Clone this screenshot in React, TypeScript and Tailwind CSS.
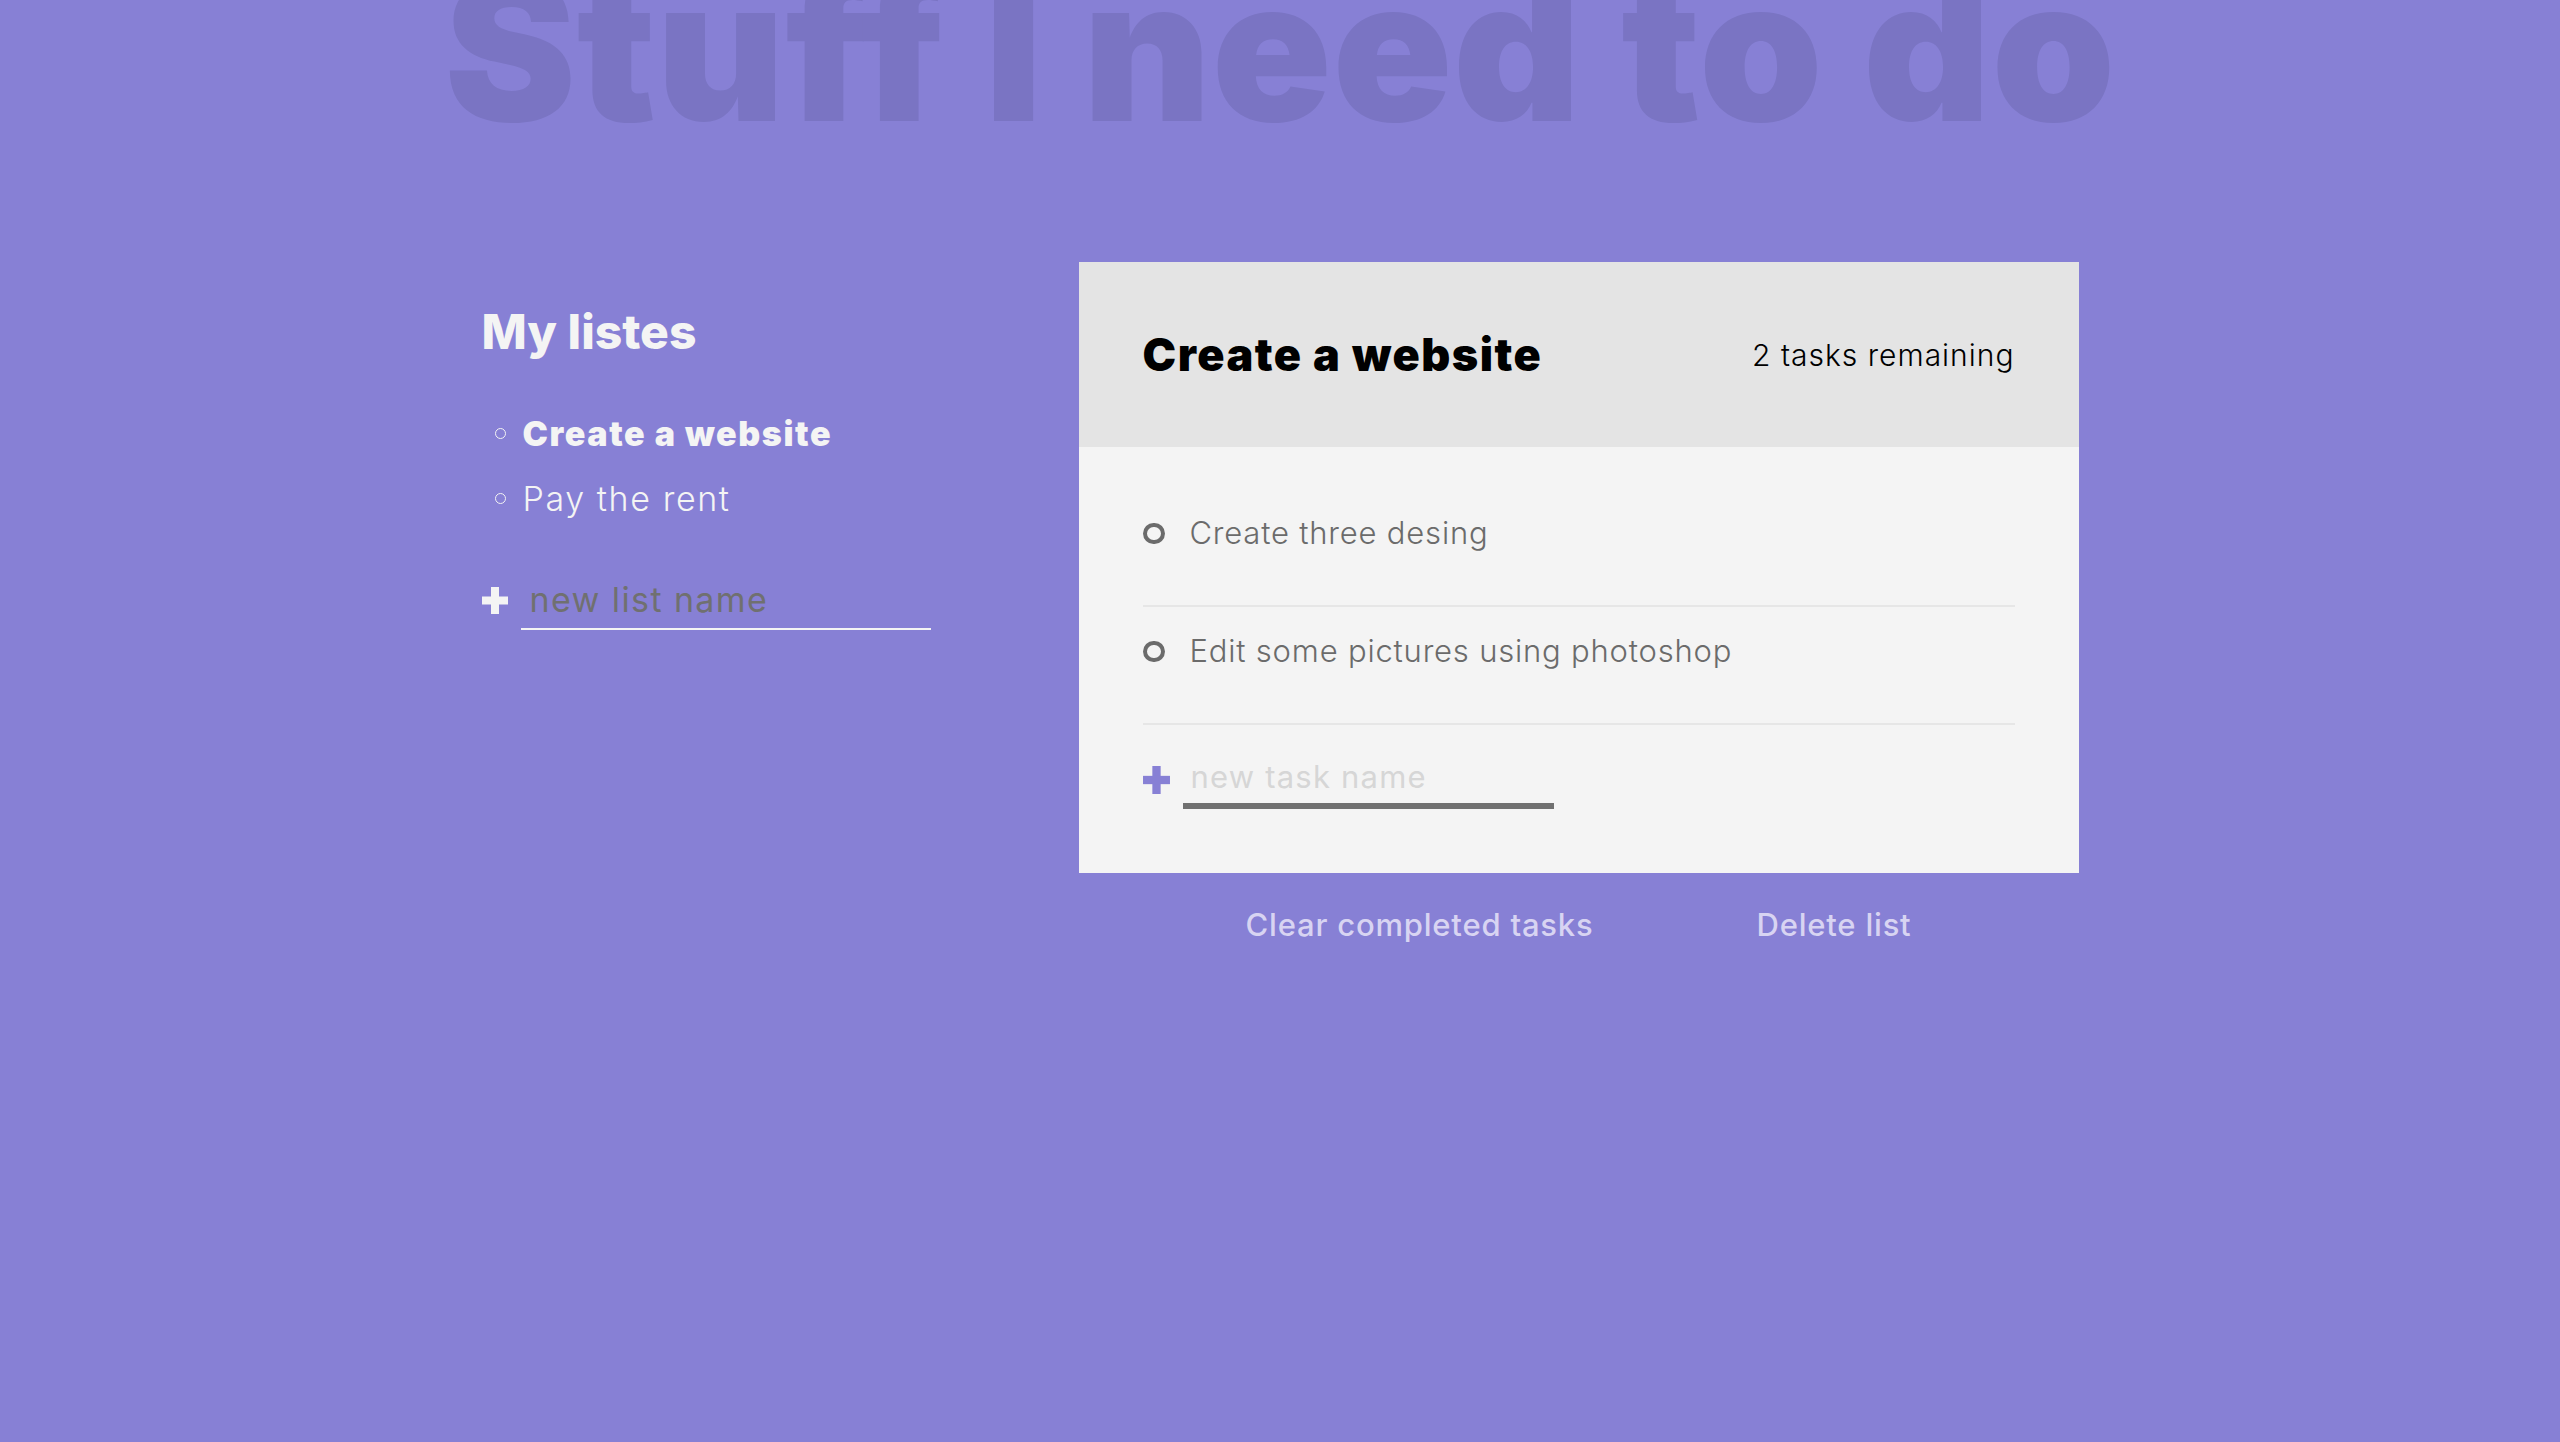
function Plus({ className }: { className: string }) {
  return (
    <svg viewBox="0 0 26 27" className={className} fill="currentColor">
      <rect x="9" y="0" width="8" height="27" />
      <rect x="0" y="9.5" width="26" height="8" />
    </svg>
  );
}

const lists = [
  { name: "Create a website", active: true },
  { name: "Pay the rent", active: false },
];

const tasks = ["Create three desing", "Edit some pictures using photoshop"];

export default function App() {
  return (
    <div className="min-h-[1442px] overflow-hidden bg-[#8780d5] font-['Inter',sans-serif]">
      <h1 className="-mt-[50px] whitespace-nowrap text-center text-[198px] font-black leading-none tracking-[0.5px] text-[#7a74c3]">
        Stuff I need to do
      </h1>

      <main className="mx-auto mt-[114px] grid w-[1597px] grid-cols-[597px_1000px]">
        <section className="pt-[46px] text-[#f4f4f4]">
          <h2 className="text-[48px] font-extrabold leading-none">My listes</h2>
          <ul className="mt-[45px]">
            {lists.map((l) => (
              <li key={l.name} className="flex h-[65px] items-center">
                <span className="ml-[13px] mr-[17px] h-[11px] w-[11px] rounded-full border-[1.5px] border-[#f4f4f4]" />
                <span
                  className={
                    l.active
                      ? "text-[34px] font-black tracking-[1.6px]"
                      : "text-[34px] font-light tracking-[1.6px]"
                  }
                >
                  {l.name}
                </span>
              </li>
            ))}
          </ul>
          <form className="mt-[40px] flex items-center">
            <button type="button" className="text-[#f4f4f4]">
              <Plus className="h-[27px] w-[26px]" />
            </button>
            <input
              placeholder="new list name"
              className="ml-[13px] h-[59px] w-[410px] border-b-2 border-[#f4f4f4] bg-transparent pl-[9px] text-[34px] tracking-[1.4px] text-[#f4f4f4] outline-none placeholder:text-[#707070]"
            />
          </form>
        </section>

        <section>
          <div className="bg-[#f4f4f4]">
            <header className="flex h-[185px] items-center justify-between bg-[#e4e4e4] px-[64px]">
              <h2 className="text-[45px] font-black leading-none tracking-[1.5px] text-black">Create a website</h2>
              <p className="text-[30px] font-light leading-none tracking-[1px] text-black">2 tasks remaining</p>
            </header>
            <div className="px-[64px] pb-[64px] pt-[42px]">
              {tasks.map((t) => (
                <div key={t} className="flex items-center border-b-2 border-[#e6e6e6] pb-[48px] pt-[20px] leading-[48px]">
                  <span className="h-[21px] w-[22px] rounded-full border-4 border-[#6b6b6b]" />
                  <span className="ml-[25px] text-[31px] font-light tracking-[0.8px] text-[#6b6b6b]">{t}</span>
                </div>
              ))}
              <form className="flex items-center pt-[25px]">
                <button type="button" className="text-[#8780d5]">
                  <Plus className="h-[28px] w-[27px]" />
                </button>
                <input
                  autoFocus
                  placeholder="new task name"
                  className="ml-[13px] h-[59px] w-[371px] border-b-[6px] border-[#707070] bg-transparent pl-[8px] text-[31px] tracking-[1.2px] text-[#6b6b6b] outline-none placeholder:text-[#d6d6d6]"
                />
              </form>
            </div>
          </div>
          <div className="mt-[36px] flex justify-center gap-[163px]">
            <button className="text-[31px] font-medium leading-none tracking-[0.8px] text-[#d8d4f2]">
              Clear completed tasks
            </button>
            <button className="text-[31px] font-medium leading-none tracking-[0.8px] text-[#d8d4f2]">
              Delete list
            </button>
          </div>
        </section>
      </main>
    </div>
  );
}
